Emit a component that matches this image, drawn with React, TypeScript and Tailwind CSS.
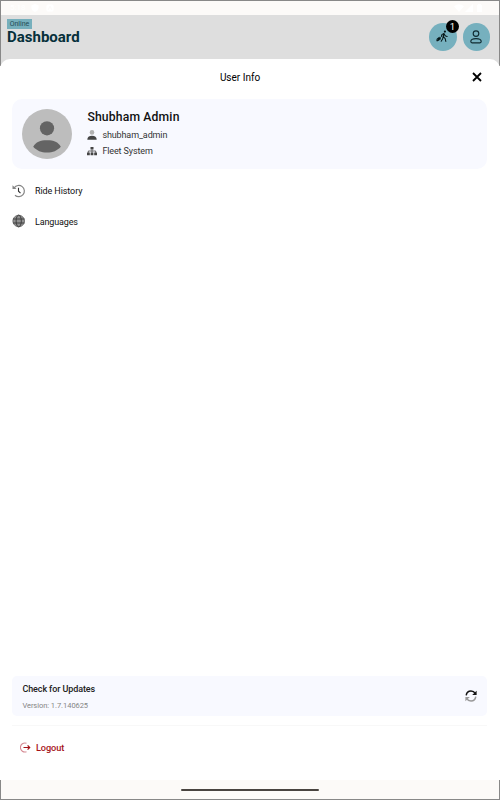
import React from 'react';

function StatusBar() {
  return (
    <div className="flex h-[14px] shrink-0 items-center justify-between bg-[#fcfaf8] pr-[15px] pl-[9px] text-white">
      <div className="flex items-center gap-[4px]">
        <span className="w-[17px] text-[8px] leading-none">5:18</span>
        <svg className="h-2 w-2" viewBox="0 0 8 8" fill="currentColor">
          <path d="M4 0 7.5 1.3V4C7.5 6 6 7.3 4 8 2 7.3.5 6 .5 4V1.3Z" />
        </svg>
        <svg className="ml-[3px] h-2 w-2" viewBox="0 0 8 8">
          <rect x=".5" y=".5" width="7" height="7" rx="1.5" fill="currentColor" />
          <path d="M2.2 5.8 4 2.2 5.8 5.8" fill="none" stroke="#fcfaf8" />
        </svg>
      </div>
      <svg className="h-[10px] w-[30px]" viewBox="0 0 30 10" fill="currentColor">
        <path d="M0 3.2Q5-.8 10 3.2L5 9Z" />
        <path d="M19 1V9H11Z" />
        <path d="M23 2h1V1h3v1h1v7h-5Z" />
      </svg>
    </div>
  );
}

function WalkerIcon() {
  return (
    <svg className="h-[13px] w-[13px]" viewBox="0 0 14 14" fill="none" stroke="#061719" strokeLinecap="round" strokeLinejoin="round">
      <circle cx="9.6" cy="1.7" r="1.2" fill="#061719" stroke="none" />
      <path d="M8.5 4.2 7.9 7.2" strokeWidth="1.7" />
      <path d="M8 7.4 9.9 9.2 10.6 12.3M7.6 7.7 7.1 9.8 5.6 12.2M8.8 4.5 10.3 6.4 12 7M8 4.1 6.3 5 5.8 6.8" strokeWidth="1.1" />
      <path d="M1.2 9.4 3.6 7.7 5 9.7 2.4 11.4Z" fill="#061719" strokeWidth=".8" />
      <circle cx="1.3" cy="11.2" r=".9" fill="#061719" stroke="none" />
      <path d="M4.6 8.3 6 7" strokeWidth=".7" />
    </svg>
  );
}

function Header() {
  return (
    <header className="flex h-[44px] shrink-0 justify-between bg-[#dedede] pr-[9px] pl-[6px]">
      <div className="flex flex-col items-start pt-[4px]">
        <span className="flex h-[10px] w-[25px] items-center justify-center bg-[#76afbc] pt-px text-[7px] leading-none text-[#234b54]">Online</span>
        <h1 className="mt-[-1px] text-[15px] leading-[18px] font-bold text-[#06303a]">Dashboard</h1>
      </div>
      <div className="flex gap-[6px] pt-[8px]">
        <div className="relative flex h-[27.5px] w-[27.5px] items-center justify-center rounded-full bg-[#76b0be]">
          <WalkerIcon />
          <span className="absolute -top-[3px] left-[17px] flex h-[13px] w-[13px] items-center justify-center rounded-full bg-black text-[9.5px] leading-none text-white">1</span>
        </div>
        <div className="flex h-[27.5px] w-[27.5px] items-center justify-center rounded-full bg-[#76b0be]">
          <svg className="h-[14px] w-[14px]" viewBox="0 0 14 14" fill="none" stroke="#102b31" strokeWidth="1.15">
            <circle cx="7" cy="3.6" r="2.8" />
            <path d="M1.8 11.6C1.8 9.7 3.8 8.6 7 8.6s5.2 1.1 5.2 3q0 1.2-1.2 1.2H3Q1.8 12.8 1.8 11.6Z" strokeLinejoin="round" />
          </svg>
        </div>
      </div>
    </header>
  );
}

function ProfileCard() {
  return (
    <section className="flex h-[70px] rounded-[10px] bg-[#f8f9ff] pl-[10.4px]">
      <svg className="mt-[10px] h-[50px] w-[50px]" viewBox="0 0 50 50">
        <circle cx="25" cy="25" r="25" fill="#bdbdbd" />
        <circle cx="25" cy="19.3" r="7.1" fill="#646464" />
        <path d="M11.2 37.8C14 33 18 31.3 25 31.3S36 33 38.8 37.8C35 41.8 31 43.6 25 43.6S15 41.8 11.2 37.8Z" fill="#646464" />
      </svg>
      <div className="ml-[15px] flex flex-col pt-[10px]">
        <h2 className="text-[12.2px] leading-[16px] font-medium tracking-[0.15px] text-[#111]">Shubham Admin</h2>
        <div className="mt-[2px] flex h-[16px] items-center gap-[5px] text-[9px] text-[#333]">
          <svg className="h-[10px] w-[10px]" viewBox="0 0 10 10">
            <circle cx="5" cy="2.4" r="2.3" fill="#b1b1b1" />
            <path d="M.3 9.8C.3 6.8 2 5.7 5 5.7s4.7 1.1 4.7 4.1Z" fill="#444" />
          </svg>
          <span className="pt-px tracking-[-0.12px]">shubham_admin</span>
        </div>
        <div className="flex h-[16px] items-center gap-[5px] text-[9px] text-[#333]">
          <svg className="h-[10px] w-[10px]" viewBox="0 0 10 10" fill="#444">
            <path d="M3.5 1h3v2.6h-3ZM0 6.5h2.8v2.8H0ZM3.6 6.5h2.8v2.8H3.6ZM7.2 6.5H10v2.8H7.2Z" />
            <path d="M5 3.5v3.3M1.3 6.8V5h7.4v1.8" fill="none" stroke="#444" strokeWidth=".8" />
          </svg>
          <span className="pt-px tracking-[-0.12px]">Fleet System</span>
        </div>
      </div>
    </section>
  );
}

function Menu() {
  return (
    <nav className="flex flex-col pt-[8px] text-[9px] text-[#111]">
      <div className="flex h-[30px] items-center gap-[9px]">
        <svg className="-mt-[2px] h-[14px] w-[14px]" viewBox="0 0 14 14" fill="none">
          <path d="M2.2 3.8A5.6 5.6 0 1 1 3 11.2" stroke="#858585" strokeWidth="1.2" />
          <path d="M.5 1.2v3.9h4Z" fill="#858585" />
          <path d="M6.5 3.8V7.2L8.5 9.2" stroke="#333" strokeWidth="1.1" />
        </svg>
        <span className="tracking-[-0.09px]">Ride History</span>
      </div>
      <div className="flex h-[30px] items-center gap-[9px]">
        <svg className="-mt-[2px] h-[14px] w-[14px]" viewBox="0 0 14 14" fill="none" stroke="#383838" strokeWidth=".9">
          <circle cx="6.7" cy="7" r="5.8" fill="#929292" stroke="#666" />
          <ellipse cx="6.7" cy="7" rx="2.6" ry="5.8" />
          <path d="M1 5h11.4M1 9h11.4" />
        </svg>
        <span className="pt-px tracking-[-0.15px]">Languages</span>
      </div>
    </nav>
  );
}

export default function App() {
  return (
    <div className="flex h-[800px] w-[500px] flex-col overflow-hidden bg-[#fcfaf8] font-['Roboto',sans-serif]">
      <div className="h-[66px] shrink-0 border-x border-t border-[#888] bg-[#dedede]">
        <div className="flex flex-col">
          <StatusBar />
          <Header />
        </div>
      </div>
      <main className="relative mt-[-7px] flex h-[721px] shrink-0 flex-col rounded-t-[10px] bg-white pr-[13px] pl-[12px]">
        <div className="flex h-[40px] shrink-0 items-center">
          <h2 className="mr-[4px] -mt-[3px] flex-1 text-center text-[10px] leading-none text-black">
            User Info
          </h2>
          <svg className="mt-[-4px] mr-[5px] h-[10px] w-[10px]" viewBox="0 0 10 10" fill="none" stroke="black" strokeWidth="1.8">
            <path d="m1 1 8 8M9 1 1 9" />
          </svg>
        </div>
        <ProfileCard />
        <Menu />
        <footer className="mt-auto flex h-[104px] flex-col">
          <div className="flex h-[40px] shrink-0 items-center justify-between rounded-[5px] bg-[#f8f9ff] pr-[10px] pl-[10.4px]">
            <div>
              <div className="pt-px text-[9px] leading-[12px] font-medium tracking-[-0.1px] text-[#222]">Check for Updates</div>
              <div className="mt-[5px] text-[7.5px] leading-[11px] tracking-[-0.05px] text-[#858585]">Version: 1.7.140625</div>
            </div>
            <svg className="-mt-px h-[12px] w-[12px]" viewBox="0 0 12 12" fill="none" strokeWidth="1.5">
              <path d="M1.2 5.3C1.6 2.6 3.6 1 6 1c1.8 0 3.3.8 4.2 2.4" stroke="#151515" />
              <path d="M11.6.7V5H7.2Z" fill="#151515" />
              <path d="M10.8 6.7C10.4 9.4 8.4 11 6 11c-1.8 0-3.3-.8-4.2-2.4" stroke="#999" />
              <path d="M.4 11.3V7h4.4Z" fill="#999" />
            </svg>
          </div>
          <div className="mt-[9px] h-px shrink-0 bg-[#f8f8f8]" />
          <div className="mt-[14px] flex h-[16px] items-center gap-[5px] pl-[8px] text-[9.2px] font-medium text-[#a51218]">
            <svg className="-mt-px h-[11px] w-[11px]" viewBox="0 0 11 11" fill="none">
              <path d="M6.5 1.3A4.5 4.5 0 1 0 6.5 9.7" stroke="#d58a93" strokeWidth="1.1" />
              <path d="M3.5 5.5h6M7.6 3.4l2.1 2.1-2.1 2.1" stroke="#a51218" strokeWidth="1.2" />
            </svg>
            <span className="tracking-[-0.1px]">Logout</span>
          </div>
        </footer>
      </main>
      <div className="flex h-[20px] shrink-0 items-center justify-center border-x border-b border-[#888] bg-[#fcfaf8]">
        <div className="h-[2px] w-[138px] rounded-full bg-[#494440]" />
      </div>
    </div>
  );
}
